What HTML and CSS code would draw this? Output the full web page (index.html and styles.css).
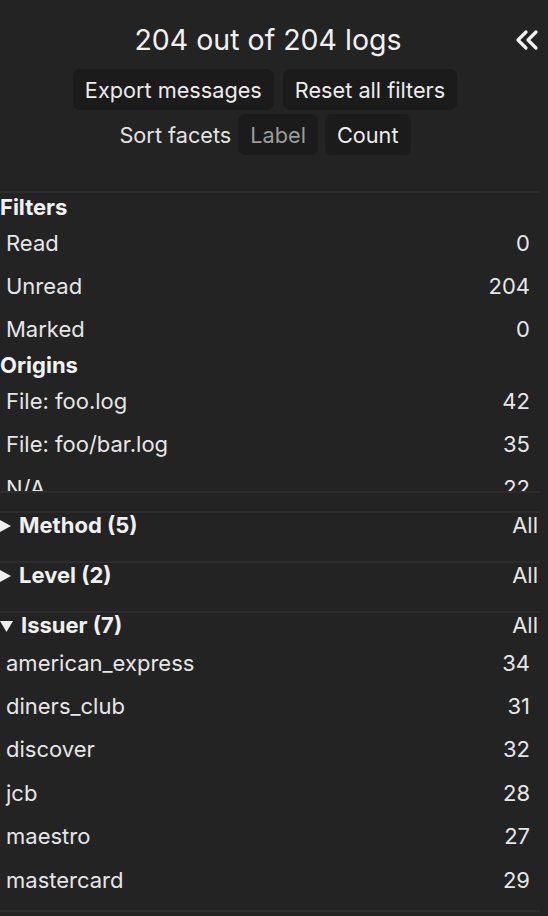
FILE: index.html
```html
<!DOCTYPE html>
<html>
<head>
<meta charset="utf-8">
<link rel="stylesheet" href="styles.css">
</head>
<body>
<div class="sidebar">
  <header class="top">
    <div class="title-row">
      <h1 class="title">204 out of 204 logs</h1>
      <button class="collapse" aria-label="Collapse">
        <svg width="26" height="22" viewBox="0 0 26 22"><path d="M12 3 L4 11 L12 19 M22 3 L14 11 L22 19" fill="none" stroke="#f2f2f2" stroke-width="3.2" stroke-linecap="round" stroke-linejoin="round"/></svg>
      </button>
    </div>
    <div class="btn-row">
      <button class="btn">Export messages</button>
      <button class="btn">Reset all filters</button>
    </div>
    <div class="btn-row sort-row">
      <span class="sort-label">Sort facets</span>
      <button class="btn dim">Label</button>
      <button class="btn">Count</button>
    </div>
  </header>

  <div class="sep"></div>

  <div class="panel">
    <div class="group-title">Filters</div>
    <div class="row"><span>Read</span><span>0</span></div>
    <div class="row"><span>Unread</span><span>204</span></div>
    <div class="row"><span>Marked</span><span>0</span></div>
    <div class="group-title">Origins</div>
    <div class="row"><span>File: foo.log</span><span>42</span></div>
    <div class="row"><span>File: foo/bar.log</span><span>35</span></div>
    <div class="row"><span>N/A</span><span>22</span></div>
  </div>

  <section class="facet collapsed">
    <div class="facet-head"><span class="name"><svg class="tri" width="19" height="14" viewBox="0 0 19 14"><path d="M0 1 L11 7 L0 13 Z" fill="#f0f0f0"/></svg>Method (5)</span><span class="all">All</span></div>
  </section>
  <section class="facet collapsed">
    <div class="facet-head"><span class="name"><svg class="tri" width="19" height="14" viewBox="0 0 19 14"><path d="M0 1 L11 7 L0 13 Z" fill="#f0f0f0"/></svg>Level (2)</span><span class="all">All</span></div>
  </section>
  <section class="facet open">
    <div class="facet-head"><span class="name"><svg class="tri" width="21" height="14" viewBox="0 0 21 14"><path d="M0 2 L13 2 L6.5 13 Z" fill="#f0f0f0"/></svg>Issuer (7)</span><span class="all">All</span></div>
    <div class="row"><span>american_express</span><span>34</span></div>
    <div class="row"><span>diners_club</span><span>31</span></div>
    <div class="row"><span>discover</span><span>32</span></div>
    <div class="row"><span>jcb</span><span>28</span></div>
    <div class="row"><span>maestro</span><span>27</span></div>
    <div class="row"><span>mastercard</span><span>29</span></div>
  </section>
  <div class="sep bottom"></div>
</div>
</body>
</html>
```

FILE: styles.css
```css
html, body {
  margin: 0;
  padding: 0;
  background: #232323;
  height: 100%;
  overflow: hidden;
}
body {
  font-family: Inter, "Noto Sans", sans-serif;
  color: #e9e9e9;
}
.sidebar {
  width: 540px;
  display: flex;
  flex-direction: column;
}
.top {
  width: 530px;
  padding-top: 20px;
  display: flex;
  flex-direction: column;
  align-items: center;
}
.title-row {
  position: relative;
  width: 100%;
  display: flex;
  justify-content: center;
}
.title {
  margin: 0 0 0 6px;
  font-size: 28.5px;
  font-weight: 400;
  line-height: 40px;
  color: #f0f0f0;
}
.collapse {
  position: absolute;
  right: -10px;
  top: 9px;
  padding: 0;
  border: 0;
  background: none;
  display: flex;
}
.btn-row {
  display: flex;
  gap: 9px;
  align-items: center;
  margin-top: 9px;
}
.sort-row {
  margin-top: 4px;
  gap: 7px;
}
.btn {
  font-family: inherit;
  font-size: 21.7px;
  color: #ececec;
  background: #1b1b1b;
  border: 0;
  border-radius: 7px;
  height: 41px;
  padding: 0 12px;
}
.btn.dim {
  color: #9c9c9c;
}
.sort-label {
  font-size: 21.7px;
  color: #e2e2e2;
}
.sep {
  height: 2px;
  background: #2c2c2c;
  margin-top: 36px;
  width: 540px;
}
.sep.bottom {
  margin-top: 9px;
}
.panel {
  height: 298px;
  overflow: hidden;
  border-bottom: 2px solid #2c2c2c;
}
.group-title {
  font-weight: 700;
  font-size: 22px;
  line-height: 28px;
  color: #f2f2f2;
}
.row {
  display: flex;
  justify-content: space-between;
  align-items: center;
  height: 43.4px;
  font-size: 22px;
  padding: 0 10px 0 6px;
  color: #e6e6e6;
}
.facet {
  border-top: 2px solid #2c2c2c;
}
.facet.collapsed {
  padding-bottom: 24px;
}
.panel + .facet {
  margin-top: 18px;
}
.facet-head {
  display: flex;
  justify-content: space-between;
  align-items: center;
  line-height: 24px;
  font-size: 22px;
}
.facet.open .facet-head {
  margin-bottom: 4px;
}
.name {
  font-weight: 700;
  color: #f0f0f0;
  display: flex;
  align-items: center;
}
.tri {
  flex: none;
  margin-top: 2px;
}
.all {
  font-weight: 400;
  color: #e6e6e6;
  padding-right: 2px;
}
```
